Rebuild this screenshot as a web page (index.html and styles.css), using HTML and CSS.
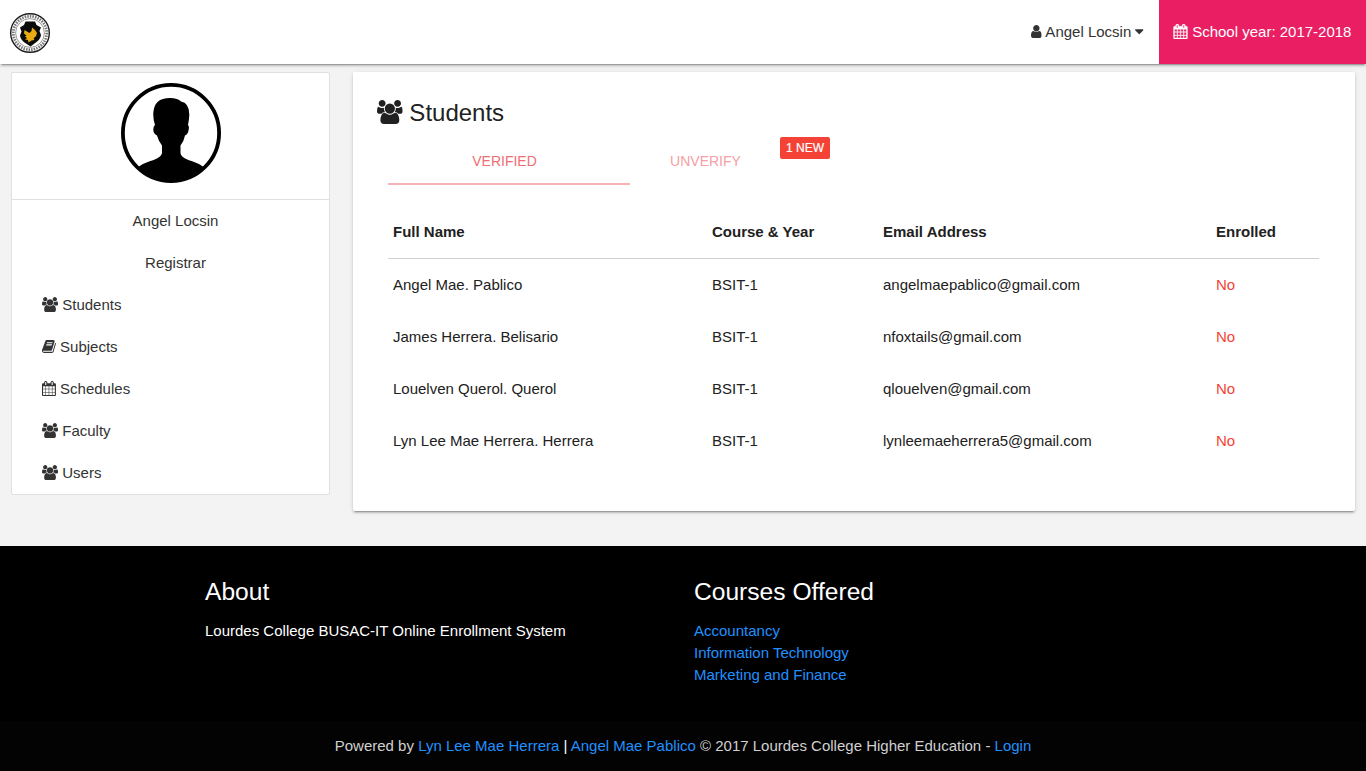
FILE: index.html
```
<!DOCTYPE html>
<html lang="en">
<head>
<meta charset="utf-8">
<title>Students</title>
<link rel="stylesheet" href="styles.css">
</head>
<body>
<svg class="sprite" width="0" height="0" aria-hidden="true">
<symbol id="users" viewBox="0 0 1920 1792"><path d="M593 896q-162 5-265 128h-134q-82 0-138-40.5t-56-118.5q0-353 124-353 6 0 43.5 21t97.5 42.5 119 21.5q67 0 133-23-5 37-5 66 0 139 81 256zm1071 637q0 120-73 189.5t-194 69.5h-874q-121 0-194-69.5t-73-189.5q0-53 3.5-103.5t14-109 26.5-108.5 43-97.5 62-81 85.5-53.5 111.5-20q10 0 43 21.5t73 48 107 48 135 21.5 135-21.5 107-48 73-48 43-21.5q61 0 111.5 20t85.5 53.5 62 81 43 97.5 26.5 108.5 14 109 3.5 103.5zm-1024-1277q0 106-75 181t-181 75-181-75-75-181 75-181 181-75 181 75 75 181zm704 384q0 159-112.5 271.5t-271.5 112.5-271.5-112.5-112.5-271.5 112.5-271.5 271.5-112.5 271.5 112.5 112.5 271.5zm576 225q0 78-56 118.5t-138 40.5h-134q-103-123-265-128 81-117 81-256 0-29-5-66 66 23 133 23 59 0 119-21.5t97.5-42.5 43.5-21q124 0 124 353zm-128-609q0 106-75 181t-181 75-181-75-75-181 75-181 181-75 181 75 75 181z"/></symbol>
<symbol id="calendar" viewBox="64 0 1664 1792"><path d="M192 1664h288v-288h-288v288zm352 0h320v-288h-320v288zm-352-352h288v-320h-288v320zm352 0h320v-320h-320v320zm-352-384h288v-288h-288v288zm736 736h320v-288h-320v288zm-384-736h320v-288h-320v288zm768 736h288v-288h-288v288zm-384-352h320v-320h-320v320zm-352-864v-288q0-13-9.5-22.5t-22.5-9.5h-64q-13 0-22.5 9.5t-9.5 22.5v288q0 13 9.5 22.5t22.5 9.5h64q13 0 22.5-9.5t9.5-22.5zm736 864h288v-320h-288v320zm-384-384h320v-288h-320v288zm384 0h288v-288h-288v288zm32-480v-288q0-13-9.5-22.5t-22.5-9.5h-64q-13 0-22.5 9.5t-9.5 22.5v288q0 13 9.5 22.5t22.5 9.5h64q13 0 22.5-9.5t9.5-22.5zm384-64v1280q0 52-38 90t-90 38h-1408q-52 0-90-38t-38-90v-1280q0-52 38-90t90-38h128v-96q0-66 47-113t113-47h64q66 0 113 47t47 113v96h384v-96q0-66 47-113t113-47h64q66 0 113 47t47 113v96h128q52 0 90 38t38 90z"/></symbol>
<symbol id="book" viewBox="64 0 1664 1792"><path d="M1703 478q40 57 18 129l-275 906q-19 64-76.5 107.5t-122.5 43.5h-923q-77 0-148.5-53.5t-99.5-131.5q-24-67-2-127 0-4 3-27t4-37q1-8-3-21.5t-3-19.5q2-11 8-21t16.5-23.5 16.5-23.5q23-38 45-91.5t30-91.5q3-10 .5-30t-.5-28q3-11 17-28t17-23q21-36 42-92t25-90q1-9-2.5-32t.5-28q4-13 22-30.5t22-22.5q19-26 42.5-84.5t27.5-96.5q1-8-3-25.5t-2-26.5q2-8 9-18t18-23 17-21q8-12 16.5-30.5t15-35 16-36 19.5-32 26.5-23.5 36-11.5 47.5 5.5l-1 3q38-9 51-9h761q74 0 114 56t18 130l-274 906q-36 119-71.5 153.5t-128.5 34.5h-869q-27 0-38 15-11 16-1 43 24 70 144 70h923q29 0 56-15.5t35-41.5l300-987q7-22 5-57 38 15 59 43zm-1064 2q-4 13 2 22.5t20 9.5h608q13 0 25.5-9.5t16.5-22.5l21-64q4-13-2-22.5t-20-9.5h-608q-13 0-25.5 9.5t-16.5 22.5zm-83 256q-4 13 2 22.5t20 9.5h608q13 0 25.5-9.5t16.5-22.5l21-64q4-13-2-22.5t-20-9.5h-608q-13 0-25.5 9.5t-16.5 22.5z"/></symbol>
<symbol id="user" viewBox="256 0 1280 1792"><path d="M1536 1399q0 109-62.5 187t-150.5 78h-854q-88 0-150.5-78t-62.5-187q0-85 8.5-160.5t31.5-152 58.5-131 94-89 134.5-34.5q131 128 313 128t313-128q76 0 134.5 34.5t94 89 58.5 131 31.5 152 8.5 160.5zm-256-887q0 159-112.5 271.5t-271.5 112.5-271.5-112.5-112.5-271.5 112.5-271.5 271.5-112.5 271.5 112.5 112.5 271.5z"/></symbol>
<symbol id="caret" viewBox="0 0 1024 1792"><path d="M1024 704q0 26-19 45l-448 448q-19 19-45 19t-45-19l-448-448q-19-19-19-45t19-45 45-19h896q26 0 45 19t19 45z"/></symbol>
</svg>
<header class="navbar">
  <svg class="logo" viewBox="0 0 40 40">
    <circle cx="20" cy="20" r="19.3" fill="#fff" stroke="#1c1c1c" stroke-width="1.400"/>
    <circle cx="20" cy="20" r="16.700" fill="none" stroke="#777" stroke-width="2.800" stroke-dasharray="1.5 1.100"/>
    <circle cx="20" cy="20" r="14.400" fill="#fff" stroke="#555" stroke-width=".6"/>
    <path d="M15.500 8.500h9.500l1.500 3.500 4.500 2.500-1.500 3.500 1.500 4q-.5 4-4.500 7L20.500 33.500l-6-4q-4-3-4.500-7l1.500-4-1.500-4 4-2.500z" fill="#0b0b0b"/>
    <path d="M14.500 17l5 3 2-2 .5-3.500 3 2.500 2 3-1 3-2.500 2.500 1 1.500-3 .5-3 2-.5-2.500-3-.5 2-1.500-2-1.500 1.500-1-2.500-2z" fill="#e9ad12"/>
  </svg>
  <nav class="nav-items">
    <a class="account"><svg class="icon w-user"><use href="#user"/></svg> Angel Locsin <svg class="icon w-caret"><use href="#caret"/></svg></a>
    <a class="school-year"><svg class="icon w-book"><use href="#calendar"/></svg> School year: 2017-2018</a>
  </nav>
</header>
<main class="content">
  <aside class="sidebar">
    <div class="avatar-box">
      <svg class="avatar" viewBox="0 0 100 100">
        <circle cx="50" cy="50" r="48.100" fill="#fff" stroke="#000" stroke-width="3.800"/>
        <path d="M17.500 84C24 78 40 77 41 70V62.500Q37.500 58 36 52.500 32.500 51 32.300 46.500 32.200 43.500 34 42 32 36 32.300 30 33 15 49 15 57 15 60 18.500 68.500 20 68.300 32 68 37 67 42 68.300 43 67.700 46.500 67 51.500 64 52.500 63 58 59.500 62.500V70C60 77 76 78 82.500 84A47 47 0 0 1 17.500 84z" fill="#000"/>
      </svg>
    </div>
    <div class="item name">Angel Locsin</div>
    <div class="item name">Registrar</div>
    <a class="item"><svg class="icon w-users"><use href="#users"/></svg> Students</a>
    <a class="item"><svg class="icon w-book"><use href="#book"/></svg> Subjects</a>
    <a class="item"><svg class="icon w-book"><use href="#calendar"/></svg> Schedules</a>
    <a class="item"><svg class="icon w-users"><use href="#users"/></svg> Faculty</a>
    <a class="item"><svg class="icon w-users"><use href="#users"/></svg> Users</a>
  </aside>
  <section class="card">
    <h1 class="title"><svg class="icon w-users"><use href="#users"/></svg> Students</h1>
    <div class="tabs">
      <a class="tab active">VERIFIED</a>
      <a class="tab second"><span class="tab-label">UNVERIFY</span><span class="badge">1 NEW</span></a>
    </div>
    <table class="students">
      <thead><tr><th class="c-name">Full Name</th><th class="c-course">Course &amp; Year</th><th class="c-email">Email Address</th><th>Enrolled</th></tr></thead>
      <tbody>
        <tr><td>Angel Mae. Pablico</td><td>BSIT-1</td><td>angelmaepablico@gmail.com</td><td class="no">No</td></tr>
        <tr><td>James Herrera. Belisario</td><td>BSIT-1</td><td>nfoxtails@gmail.com</td><td class="no">No</td></tr>
        <tr><td>Louelven Querol. Querol</td><td>BSIT-1</td><td>qlouelven@gmail.com</td><td class="no">No</td></tr>
        <tr><td>Lyn Lee Mae Herrera. Herrera</td><td>BSIT-1</td><td>lynleemaeherrera5@gmail.com</td><td class="no">No</td></tr>
      </tbody>
    </table>
  </section>
</main>
<footer class="footer">
  <div class="footer-cols">
    <div><h2 class="footer-title">About</h2><p class="footer-text">Lourdes College BUSAC-IT Online Enrollment System</p></div>
    <div><h2 class="footer-title">Courses Offered</h2>
      <ul class="links"><li><a>Accountancy</a></li><li><a>Information Technology</a></li><li><a>Marketing and Finance</a></li></ul></div>
  </div>
  <div class="copyright">Powered by <a>Lyn Lee Mae Herrera</a> <span class="divider">|</span> <a>Angel Mae Pablico</a> © 2017 Lourdes College Higher Education - <a>Login</a></div>
</footer>
</body>
</html>
```
FILE: styles.css
```
* { box-sizing: border-box; }
body {
  margin: 0;
  height: 771px;
  display: flex;
  flex-direction: column;
  overflow: hidden;
  background: #f3f3f3;
  color: #212121;
  font: 15px/22px "Liberation Sans", Arial, sans-serif;
}
.sprite { position: absolute; }
.icon { height: 1em; fill: currentColor; vertical-align: -0.143em; }
.w-users { width: 1.0714em; }
.w-book { width: .9286em; }
.w-user { width: .7143em; }
.w-caret { width: .5714em; }
.navbar {
  height: 64px;
  flex: none;
  display: flex;
  justify-content: space-between;
  background: #fff;
  box-shadow: 0 2px 2px 0 rgba(0,0,0,.14), 0 1px 5px 0 rgba(0,0,0,.12), 0 3px 1px -2px rgba(0,0,0,.2);
}
.logo { width: 40px; height: 40px; margin: 13px 0 0 10px; }
.nav-items { display: flex; line-height: 64px; white-space: nowrap; }
.account { padding: 0 15px; color: #333; }
.school-year { width: 207px; padding-left: 14px; background: #e91e63; color: #fff; }
.school-year .icon { width: 15px; stroke: currentColor; stroke-width: 40; }
.content {
  height: 482px;
  flex: none;
  display: flex;
  align-items: flex-start;
  gap: 23px;
  padding: 8px 11px 0;
}
.sidebar { width: 319px; border: 1px solid #e0e0e0; border-radius: 2px; background: #fff; color: #333; }
.avatar-box { height: 127px; padding-top: 10px; border-bottom: 1px solid #e0e0e0; text-align: center; }
.avatar { width: 100px; height: 100px; }
.item { display: block; height: 42px; padding: 10px 20px 10px 30px; }
.name { text-align: center; }
.card {
  width: 1002px;
  height: 439px;
  padding: 24px 36px 0 35px;
  border-radius: 2px;
  background: #fff;
  box-shadow: 0 2px 2px 0 rgba(0,0,0,.14), 0 1px 5px 0 rgba(0,0,0,.12), 0 3px 1px -2px rgba(0,0,0,.2);
}
.title { margin: 0 0 0 -11px; font-size: 24px; line-height: 34px; font-weight: 400; }
.tabs { display: flex; height: 48px; margin-top: 7px; font-size: 14px; line-height: 48px; color: #f5a0a4; }
.tab { width: 233px; text-align: center; }
.active { color: #ee6e73; position: relative; }
.active::after { content: ""; position: absolute; left: 0; bottom: 0; width: 242px; height: 2px; background: #f6b2b5; }
.second { display: flex; padding: 0 24px; }
.tab-label { flex: 1; }
.badge { width: 50px; height: 22px; margin-left: 14px; border-radius: 2px; background: #f44336; color: #fff; font-size: 12px; line-height: 22px; -webkit-text-stroke: .2px #fff; }
.students { width: 931px; margin-top: 21px; table-layout: fixed; border-collapse: collapse; text-align: left; }
.students thead { border-bottom: 1px solid #d0d0d0; }
.students tr { height: 52px; }
.students th, .students td { padding: 0 5px; }
.students td { padding-top: 2px; }
.c-name { width: 319px; }
.c-course { width: 171px; }
.c-email { width: 333px; }
.students .no { color: #f44336; }
.footer { flex: 1; display: flex; flex-direction: column; background: #000; color: #fff; }
.footer-cols { height: 175px; display: grid; grid-template-columns: 489px 1fr; padding: 32px 0 0 205px; }
.footer-title { margin: 0 0 15px; font-size: 24.6px; line-height: 27px; font-weight: 400; }
.footer-text { margin: 0; }
.links { margin: 0; padding: 0; list-style: none; }
.footer a { color: #2090ff; }
.copyright { height: 50px; line-height: 50px; text-align: center; background: #030303; color: #d0d0d0; }
.divider { color: #fff; }
```
